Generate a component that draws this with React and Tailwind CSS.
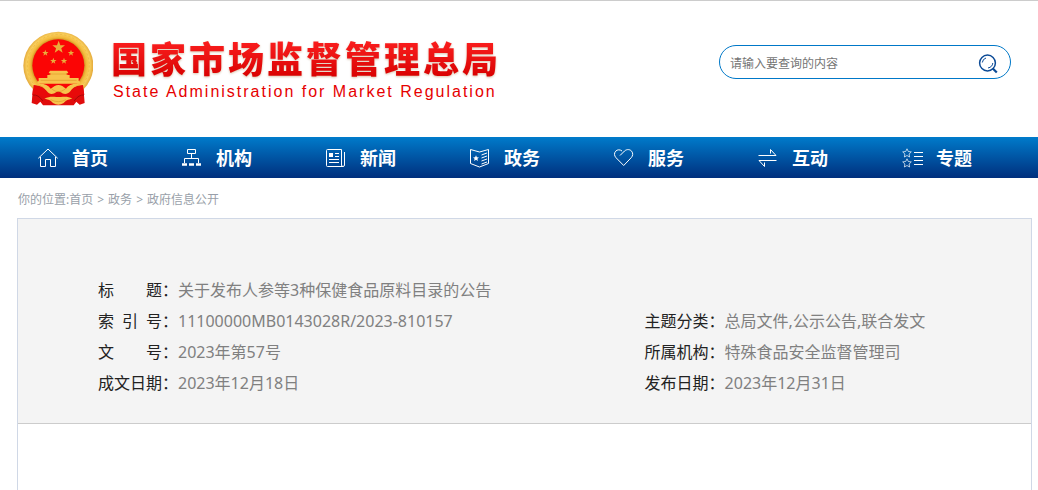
import { useState } from 'react'

const navItems = [
  { label: '首页', icon: HomeIcon },
  { label: '机构', icon: OrgIcon },
  { label: '新闻', icon: NewsIcon },
  { label: '政务', icon: AffairsIcon },
  { label: '服务', icon: HeartIcon },
  { label: '互动', icon: ExchangeIcon },
  { label: '专题', icon: TopicIcon }
]

const crumbs = ['首页', '政务', '政府信息公开']

const leftFields = [
  { label: '标 题', value: '关于发布人参等3种保健食品原料目录的公告' },
  { label: '索 引 号', value: '11100000MB0143028R/2023-810157' },
  { label: '文 号', value: '2023年第57号' },
  { label: '成文日期', value: '2023年12月18日' }
]

const rightFields = [
  { label: '主题分类', value: '总局文件,公示公告,联合发文' },
  { label: '所属机构', value: '特殊食品安全监督管理司' },
  { label: '发布日期', value: '2023年12月31日' }
]

function NavIcon({ children }) {
  return (
    <svg viewBox="0 0 20 20" className="w-5 h-5 shrink-0 overflow-visible" fill="none" stroke="currentColor" strokeWidth="1" aria-hidden="true">
      {children}
    </svg>
  )
}

function HomeIcon() {
  return (
    <NavIcon>
      <path d="M0.3 10.3 10 1l9.700 9.300M2.500 9v9.500h5V11.500h5v7h5V9" />
    </NavIcon>
  )
}

function OrgIcon() {
  return (
    <NavIcon>
      <path d="M5.500 1.500h8v4h-8zM9.500 5.500v5M2.500 15v-4.500h14V15" />
      <path d="M0 16.500h5M7 16.500h5M14 16.500h5" strokeWidth="2.500" />
    </NavIcon>
  )
}

function NewsIcon() {
  return (
    <NavIcon>
      <path d="M17 18.500H1.500a1 1 0 0 1-1-1v-15a1 1 0 0 1 1-1h14v15.500q0 1.500 1.500 1.500t1.500-1.500V4" />
      <path d="M9 5.500h4M9 8.500h4M3 11.500h10M3 14.500h10" />
      <path d="M3 5h4v4H3z" fill="currentColor" stroke="none" />
    </NavIcon>
  )
}

function AffairsIcon() {
  return (
    <NavIcon>
      <path d="M0.500 1.500 9.500 4 18.500 1.500v14L9.500 19 0.500 15.500z" />
      <path d="M11.500 7 17 5M11.500 10 17 8M11.500 13 17 11M11.500 16 17 14" />
      <path d="m6 7.300.900 1.900 2.100.200-1.600 1.400.500 2.100L6 11.800l-1.900 1.100.500-2.100L3 9.400l2.100-.200z" fill="currentColor" stroke="none" />
    </NavIcon>
  )
}

function HeartIcon() {
  return (
    <NavIcon>
      <path d="M6 7.500 10.500 3C13 .900 16 1.300 17.600 3.200c1.700 2 1.300 4.700-.400 6.500L9.700 17.500 2 9.700C.200 7.800-.100 5 1.700 3.200 3.400 1.400 6 1.400 8 3" />
    </NavIcon>
  )
}

function ExchangeIcon() {
  return (
    <NavIcon>
      <path d="M0.500 7.500h17.500L12.500 1.500v4M18.500 12.500H1l5.500 6v-4" />
    </NavIcon>
  )
}

function TopicIcon() {
  return (
    <NavIcon>
      <path d="M12 4.500h9M12 8.500h9M12 12.500h9M12 16.500h9" />
      <path
        d="m5 .800 1.300 2.700 3 .400L7.100 6l.500 3L5 7.500 2.400 9l.500-3L.700 3.900l3-.400zM5 10.800l1.300 2.700 3 .400L7.100 16l.500 3L5 17.500 2.400 19l.500-3L.700 13.900l3-.400z"
        strokeWidth="0.700"
      />
    </NavIcon>
  )
}

function SearchIcon() {
  return (
    <svg viewBox="0 0 20 20" className="w-5 h-5" fill="none" stroke="currentColor" aria-hidden="true">
      <circle cx="9.500" cy="9" r="7.900" strokeWidth="1.500" />
      <path d="M4.300 8.500Q4.700 5 8 4M14.800 9q-.300 4-4.800 5" strokeWidth="1" />
      <path d="m14.800 14.500 4 4" strokeWidth="2.200" />
    </svg>
  )
}

function Emblem() {
  return (
    <svg viewBox="37 34 210 228" className="w-[70px] h-[76px] shrink-0" role="img" aria-label="国徽">
      <defs>
        <radialGradient id="wreath" cx="143" cy="137" r="105" gradientUnits="userSpaceOnUse">
          <stop offset="0.720" stopColor="#c4861c" />
          <stop offset="0.800" stopColor="#f2b93b" />
          <stop offset="0.900" stopColor="#f9cf5c" />
          <stop offset="1" stopColor="#e3a83a" />
        </radialGradient>
        <path id="star" d="M0-10 2.500-3.200 9.500-3.100 3.900 1.200 5.900 8.100 0 4.100-5.900 8.100-3.900 1.200-9.500-3.100-2.500-3.200z" />
      </defs>
      <path d="M68 192 63 250l16 5 10-9 8 11h92l8-11 10 9 15-5-5-58-30 20h-90z" fill="#e00c0c" />
      <ellipse cx="143" cy="138" rx="105" ry="102" fill="url(#wreath)" />
      <circle cx="143" cy="137" r="93" fill="none" stroke="#e0a633" strokeWidth="3" strokeDasharray="7 6" opacity="0.400" />
      <circle cx="143" cy="137" r="78" fill="#fb0505" />
      <g fill="#e9ad3c">
        <use href="#star" transform="translate(144 83) scale(2)" />
        <use href="#star" transform="translate(104 100)" />
        <use href="#star" transform="translate(181 100)" />
        <use href="#star" transform="translate(128 124)" />
        <use href="#star" transform="translate(160 124)" />
      </g>
      <path d="M118 153h51l4 7h-5v6h9v9h27v9l4 2v6H80v-6l4-2v-9h26v-9h9v-6h-5z" fill="#f7c34c" />
      <path d="M115 163h57M90 182h108" stroke="#e39a2a" strokeWidth="2" />
      <path d="M69 196c18 2 28 6 38 16l36-18 36 18c10-10 20-14 38-16l4 30c-24-2-35 4-43 18l-35-10-35 10c-8-14-20-20-43-18z" fill="#e80a0a" />
      <path d="M80 193c20-2 32 4 40 14l12-8q11-6 23 0l11 8c8-10 20-16 41-14-14 7-22 12-28 22-10 12-22 8-29 3q-7-5-14 0c-8 6-20 8-28-4-7-10-14-15-28-21z" fill="#f7c34c" />
      <path d="M101 237c14-7 25-6 36-5q8 0 13 0c12-1 24-2 35 5-14 2-20 6-26 13q-16 10-32 0c-6-7-12-11-26-13z" fill="#f7c34c" />
      <path d="M67 226q15-2 30 18M220 226q-15-2-30 18" fill="none" stroke="#a90707" strokeWidth="3" />
      <path d="M123 208q20 16 41 0M120 240q23 12 46 0" fill="none" stroke="#df9a2a" strokeWidth="2" />
    </svg>
  )
}

function Field({ label, value }) {
  return (
    <div className="flex leading-[31px]">
      <dt className="flex w-20 shrink-0 whitespace-nowrap text-[#222222]">
        <span className="w-16 shrink-0 [text-align-last:justify]">{label}</span>
        <span>：</span>
      </dt>
      <dd className="text-[#808080]">{value}</dd>
    </div>
  )
}

export default function App() {
  const [query, setQuery] = useState('')

  return (
    <div className="flex min-h-screen flex-col border-t border-[#cccccc] bg-white font-['Noto_Sans','Noto_Sans_CJK_SC',sans-serif] text-base">
      <header className="flex items-start justify-between pt-[30px] pr-[27px] pb-[30px] pl-[23px]">
        <a href="#" className="flex gap-[18px]">
          <Emblem />
          <span className="flex flex-col gap-1 pt-[5px]">
            <span className="bg-gradient-to-b from-[#ff2020] to-[#d80000] bg-clip-text font-['Noto_Sans_CJK_SC',sans-serif] text-4xl leading-[42px] font-black tracking-[3px] text-transparent drop-shadow-[0_1px_1px_#d9c3ac]">
              国家市场监督管理总局
            </span>
            <span className="pl-0.5 font-['Liberation_Sans',sans-serif] text-base leading-5 tracking-[2px] text-[#e60000]">
              State Administration for Market Regulation
            </span>
          </span>
        </a>
        <form
          onSubmit={(e) => e.preventDefault()}
          className="mt-[14px] flex h-[34px] w-[292px] items-center rounded-full border border-[#0078c8] pr-3 pl-[10px]"
        >
          <input
            type="text"
            aria-label="搜索"
            value={query}
            onChange={(e) => setQuery(e.target.value)}
            placeholder="请输入要查询的内容"
            className="min-w-0 flex-1 bg-transparent pt-1 text-xs outline-none placeholder:text-[#757575]"
          />
          <button type="submit" aria-label="查询" className="pt-1 text-[#0b4a96]">
            <SearchIcon />
          </button>
        </form>
      </header>

      <nav className="bg-gradient-to-b from-[#007bcb] to-[#002f7d] pr-3 pl-[18px]">
        <ul className="grid grid-cols-7">
          {navItems.map(({ label, icon: Icon }) => (
            <li key={label}>
              <a href="#" className="flex h-[41px] items-center gap-[14px] pl-5 text-lg font-bold text-white">
                <Icon />
                <span>{label}</span>
              </a>
            </li>
          ))}
        </ul>
      </nav>

      <div className="flex h-10 items-center px-[18px] pt-1 text-xs text-[#999fa9]">
        <span>你的位置:</span>
        {crumbs.map((crumb, i) => (
          <span key={crumb}>
            {i > 0 && <span className="px-1">&gt;</span>}
            <a href="#">{crumb}</a>
          </span>
        ))}
      </div>

      <main className="mr-[6px] ml-[17px] flex flex-1 flex-col border-x border-t border-[#d0d8e6]">
        <section className="grid grid-cols-[3fr_2fr] items-end border-b border-[#cccccc] bg-[#f4f4f4] pt-14 pr-[22px] pb-6 pl-20">
          <dl>
            {leftFields.map((field) => (
              <Field key={field.label} {...field} />
            ))}
          </dl>
          <dl>
            {rightFields.map((field) => (
              <Field key={field.label} {...field} />
            ))}
          </dl>
        </section>
      </main>
    </div>
  )
}
